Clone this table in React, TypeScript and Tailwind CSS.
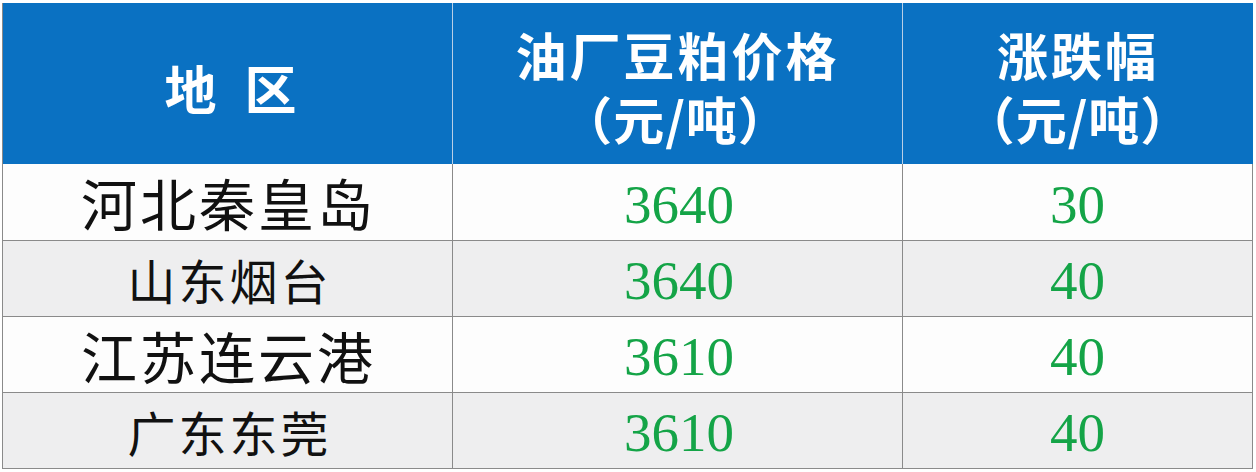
const rows = [
  { area: '河北秦皇岛', big: true, price: '3640', change: '30', bg: 'bg-[#fdfdfd]' },
  { area: '山东烟台', big: false, price: '3640', change: '40', bg: 'bg-[#eeeeef]' },
  { area: '江苏连云港', big: true, price: '3610', change: '40', bg: 'bg-[#fdfdfd]' },
  { area: '广东东莞', big: false, price: '3610', change: '40', bg: 'bg-[#eeeeef]' },
]

const cjk = "font-['Noto_Sans_CJK_SC',sans-serif]"

export default function App() {
  return (
    <div className="w-[1256px] h-[472px] bg-white pt-[3px] pl-[2px]">
      <div className="w-[1251px] border-l border-b border-[#8a8a8a]">
        {/* header */}
        <div className={`grid grid-cols-[449px_450px_351px] h-[161px] bg-[#0a71c2] text-white font-bold ${cjk}`}>
          <div className="flex items-center justify-center gap-[28px] text-[52px] leading-none pt-[8px] pl-[6px]">
            <span>地</span>
            <span>区</span>
          </div>
          <div className="flex flex-col items-center justify-center border-l border-[#b9cfe6] text-[51px] leading-[64px] pt-[4px]">
            <span className="tracking-[3px]">油厂豆粕价格</span>
            <span className="pr-[4px] tracking-[1px]">（元/吨）</span>
          </div>
          <div className="flex flex-col items-center justify-center border-l border-[#b9cfe6] text-[51px] leading-[64px] pt-[4px]">
            <span className="tracking-[3px]">涨跌幅</span>
            <span className="tracking-[1px]">（元/吨）</span>
          </div>
        </div>
        {/* body */}
        {rows.map((r, i) => (
          <div
            key={i}
            className={`grid grid-cols-[449px_450px_351px] h-[76px] ${r.bg} ${i > 0 ? 'border-t border-[#8a8a8a]' : ''}`}
          >
            <div
              className={`flex items-center justify-center text-[#111] ${cjk} ${r.big ? 'text-[56px] tracking-[3px] pl-[2px]' : 'text-[48px] tracking-[3px] pl-[4px]'} leading-none`}
            >
              {r.area}
            </div>
            <div className="flex items-center justify-center border-l border-[#8a8a8a] text-[#14a447] text-[55px] leading-none font-['Liberation_Serif',serif] pt-[4px] pl-[3px]">
              {r.price}
            </div>
            <div className="flex items-center justify-center border-l border-[#8a8a8a] border-r text-[#14a447] text-[55px] leading-none font-['Liberation_Serif',serif] pt-[4px]">
              {r.change}
            </div>
          </div>
        ))}
      </div>
    </div>
  )
}
